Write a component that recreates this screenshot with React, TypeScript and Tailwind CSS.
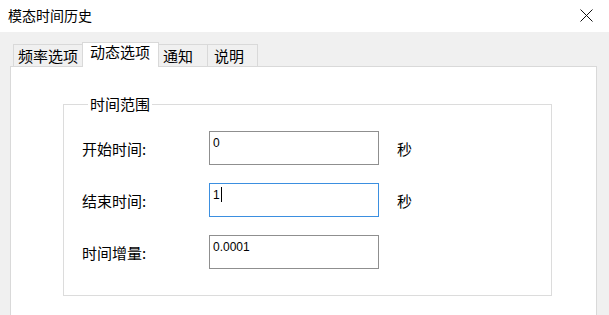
const fieldRows = [
  { label: '开始时间:', value: '0', unit: '秒', focused: false },
  { label: '结束时间:', value: '1', unit: '秒', focused: true },
  { label: '时间增量:', value: '0.0001', unit: '', focused: false },
]

function Tab({ label, active, className }: { label: string; active?: boolean; className: string }) {
  if (active) {
    return (
      <div
        className={`relative z-10 h-[25px] -mb-px -ml-px bg-white border border-b-0 border-[#d9d9d9] text-[15px] leading-[16px] ${className}`}
      >
        {label}
      </div>
    )
  }
  return (
    <div
      className={`h-[22px] -ml-px first:ml-0 bg-[#f0f0f0] border border-b-0 border-[#d9d9d9] text-[15px] leading-[18px] ${className}`}
    >
      {label}
    </div>
  )
}

export default function App() {
  return (
    <div className="w-[609px] h-[315px] bg-white flex flex-col overflow-hidden text-[#000] font-['Noto_Sans_CJK_SC','Microsoft_YaHei',sans-serif]">
      <div className="h-[32px] shrink-0 flex items-center justify-between pl-[8px] pr-[16px] pb-[2px]">
        <span className="text-[14px] leading-[20px]">模态时间历史</span>
        <svg width="13" height="13" viewBox="0 0 13 13" className="mt-[1px]">
          <path d="M0.5 0.5 L12.5 12.5 M12.5 0.5 L0.5 12.5" stroke="#111" strokeWidth="1" fill="none" />
        </svg>
      </div>

      <div className="flex-1 flex flex-col bg-[#f0f0f0] pl-[10px] pr-[12px] pt-[10px]">
        <div className="h-[24px] shrink-0 flex items-end pl-[13px] -ml-[10px]">
          <Tab label="频率选项" className="w-[70px] pl-[4px] pt-[2px]" />
          <Tab label="动态选项" active className="w-[77px] pl-[7px] pt-[1px]" />
          <Tab label="通知" className="w-[50px] pl-[4px] pt-[2px]" />
          <Tab label="说明" className="w-[51px] pl-[6px] pt-[2px]" />
        </div>

        <div className="flex-1 bg-white border border-b-0 border-[#d9d9d9]">
          <fieldset className="mt-[27px] ml-[52px] mr-[44px] border border-[#dcdcdc] pl-[18px] pt-[17px] pb-[26px]">
            <legend className="ml-[6px] px-[2px] text-[15px] leading-[20px]">时间范围</legend>
            <div className="flex flex-col gap-[18px]">
              {fieldRows.map((row) => (
                <div key={row.label} className="flex items-center h-[34px]">
                  <span className="w-[127px] text-[15px] leading-[20px] pt-[2px]">{row.label}</span>
                  <div
                    className={`w-[170px] h-[34px] border px-[3px] pt-[4px] flex items-start font-['Liberation_Sans',Arial,sans-serif] text-[12px] leading-[14px] ${
                      row.focused ? 'border-[#3b8fe0]' : 'border-[#8f8f8f]'
                    }`}
                  >
                    <span>{row.value}</span>
                    {row.focused && <span className="w-px h-[15px] bg-black ml-[1px] -mt-[1px]" />}
                  </div>
                  {row.unit && <span className="ml-[18px] text-[15px] leading-[20px] pt-[2px]">{row.unit}</span>}
                </div>
              ))}
            </div>
          </fieldset>
        </div>
      </div>
    </div>
  )
}
